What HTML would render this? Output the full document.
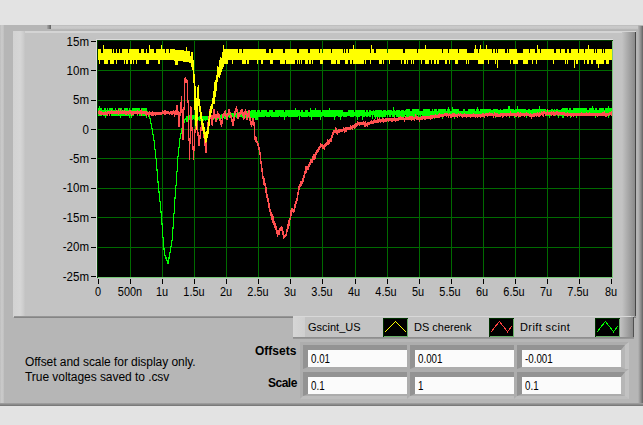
<!DOCTYPE html>
<html><head><meta charset="utf-8"><style>
html,body{margin:0;padding:0;}
body{width:643px;height:425px;position:relative;overflow:hidden;background:#e3e3e3;font-family:"Liberation Sans",sans-serif;color:#000;}
.a{position:absolute;}
.yl{position:absolute;left:20px;width:69px;text-align:right;font-size:12px;line-height:14px;transform:scaleX(0.96);transform-origin:100% 0;}
.xl{position:absolute;top:285px;width:60px;text-align:center;font-size:12px;line-height:14px;transform:scaleX(0.91);}
.tk{position:absolute;background:#000;}
.lg{position:absolute;top:320px;font-size:11px;line-height:14px;}
.bo{position:absolute;box-sizing:border-box;border-style:solid;border-width:3px 4px 3px 3px;border-color:#adadad #c2c2c2 #bdbdbd #adadad;}
.bi{position:absolute;left:0;top:0;right:0;bottom:0;border-style:solid;border-width:5px 4px 2px 5px;border-color:#939393 #b6b6b6 #acacac #939393;}
.wt{position:absolute;left:0;top:0;right:0;bottom:0;background:#fbfbfb;font-size:12px;line-height:17px;}
.wt span{position:absolute;left:3px;top:1px;font-size:12.5px;transform:scaleX(0.78);transform-origin:0 0;}
</style></head><body>
<!-- outer frame -->
<div class="a" style="left:0;top:25px;width:643px;height:381px;background:#b6b6b6;"></div>
<div class="a" style="left:0;top:25px;width:4px;height:380px;background:linear-gradient(90deg,#bcbcbc,#c9c9c9 30%,#c8c8c8 75%,#bdbdbd);"></div>
<div class="a" style="left:638px;top:26px;width:5px;height:379px;background:linear-gradient(90deg,#b6b6b6,#8a8a8a 60%,#626262);"></div>
<div class="a" style="left:0;top:403px;width:643px;height:3px;background:linear-gradient(180deg,#a4a4a4,#727272);"></div>
<div class="a" style="left:47px;top:25px;width:4px;height:4px;background:linear-gradient(90deg,#a8a8a8,#606060);"></div>
<div class="a" style="left:51px;top:25px;width:587px;height:6px;background:linear-gradient(180deg,#bababa 0,#c9c9c9 25%,#c8c8c8 55%,#b3b3b3 80%,#b3b3b3);"></div>
<!-- inner panel -->
<div class="a" style="left:13px;top:31px;width:623px;height:286px;background:#c3c3c3;"></div>
<div class="a" style="left:13px;top:31px;width:623px;height:2px;background:#d4d4d4;"></div>
<div class="a" style="left:13px;top:31px;width:12px;height:286px;background:linear-gradient(90deg,#d2d2d2,#d6d6d6 60%,#cdcdcd 85%,#c4c4c4);"></div>
<div class="a" style="left:622px;top:32px;width:13px;height:285px;background:linear-gradient(90deg,#c3c3c3,#8a8a8a);"></div><div class="a" style="left:635px;top:32px;width:1px;height:285px;background:#464646;"></div>
<div class="a" style="left:14px;top:316px;width:622px;height:2px;background:linear-gradient(180deg,#9e9e9e,#7c7c7c);"></div>
<svg width="643" height="425" style="position:absolute;left:0;top:0" shape-rendering="crispEdges">
<rect x="96" y="39" width="517" height="1" fill="#dcdcdc"/>
<rect x="96" y="39" width="1" height="239" fill="#dcdcdc"/>
<rect x="97" y="40" width="516" height="238" fill="#000"/>
<path d="M130 41h1v236h-1zM162 41h1v236h-1zM194 41h1v236h-1zM226 41h1v236h-1zM258 41h1v236h-1zM290 41h1v236h-1zM322 41h1v236h-1zM355 41h1v236h-1zM387 41h1v236h-1zM419 41h1v236h-1zM451 41h1v236h-1zM483 41h1v236h-1zM515 41h1v236h-1zM547 41h1v236h-1zM579 41h1v236h-1zM98 70h514v1h-514zM98 100h514v1h-514zM98 129h514v1h-514zM98 158h514v1h-514zM98 188h514v1h-514zM98 217h514v1h-514zM98 247h514v1h-514z" fill="#006a00"/>
<rect x="97" y="40" width="516" height="1" fill="#003c00"/>
<rect x="97" y="40" width="1" height="238" fill="#003c00"/>
<rect x="612" y="41" width="1" height="237" fill="#78c878"/>
<rect x="98" y="277" width="515" height="1" fill="#78c878"/>
<path d="M98 108h1v8h-1zM99 106h1v10h-1zM100 108h1v8h-1zM101 108h1v8h-1zM102 110h1v4h-1zM103 110h1v6h-1zM104 108h1v8h-1zM105 108h1v10h-1zM106 110h1v6h-1zM107 108h1v8h-1zM108 110h1v4h-1zM109 108h1v6h-1zM110 108h1v6h-1zM111 108h1v8h-1zM112 108h1v8h-1zM113 110h1v6h-1zM114 110h1v6h-1zM115 108h1v8h-1zM116 110h1v6h-1zM117 110h1v6h-1zM118 108h1v8h-1zM119 108h1v8h-1zM120 108h1v10h-1zM121 108h1v8h-1zM122 110h1v6h-1zM123 110h1v6h-1zM124 108h1v8h-1zM125 108h1v8h-1zM126 108h1v8h-1zM127 108h1v8h-1zM128 110h1v6h-1zM129 108h1v10h-1zM130 110h1v6h-1zM131 110h1v8h-1zM132 108h1v8h-1zM133 108h1v8h-1zM134 108h1v6h-1zM135 108h1v6h-1zM136 108h1v6h-1zM137 108h1v8h-1zM138 108h1v6h-1zM139 108h1v8h-1zM140 110h1v6h-1zM141 108h1v8h-1zM142 108h1v8h-1zM143 108h1v8h-1zM144 108h1v8h-1zM145 108h1v8h-1zM146 108h1v10h-1zM147 111h1v2h-1zM148 112h1v4h-1zM149 115h1v4h-1zM150 118h1v6h-1zM151 123h1v6h-1zM152 128h1v7h-1zM153 134h1v7h-1zM154 140h1v10h-1zM155 149h1v10h-1zM156 158h1v13h-1zM157 169h1v14h-1zM158 181h1v12h-1zM159 191h1v11h-1zM160 201h1v12h-1zM161 211h1v14h-1zM162 223h1v15h-1zM163 237h1v13h-1zM164 248h1v8h-1zM165 255h1v4h-1zM166 257h1v4h-1zM167 260h1v4h-1zM168 257h1v7h-1zM169 252h1v7h-1zM170 246h1v7h-1zM171 240h1v7h-1zM172 227h1v14h-1zM173 213h1v16h-1zM174 197h1v17h-1zM175 185h1v14h-1zM176 171h1v15h-1zM177 156h1v16h-1zM178 147h1v10h-1zM179 138h1v10h-1zM180 133h1v6h-1zM181 128h1v6h-1zM182 125h1v4h-1zM183 122h1v4h-1zM184 119h1v4h-1zM185 118h1v2h-1zM186 116h1v6h-1zM187 116h1v6h-1zM188 115h1v6h-1zM189 115h1v5h-1zM190 116h1v4h-1zM191 116h1v5h-1zM192 115h1v5h-1zM193 115h1v4h-1zM194 115h1v5h-1zM195 116h1v4h-1zM196 116h1v4h-1zM197 116h1v4h-1zM198 117h1v3h-1zM199 116h1v5h-1zM200 116h1v5h-1zM201 116h1v4h-1zM202 116h1v5h-1zM203 116h1v5h-1zM204 116h1v4h-1zM205 116h1v5h-1zM206 116h1v4h-1zM207 116h1v4h-1zM208 116h1v4h-1zM209 115h1v5h-1zM210 115h1v4h-1zM211 115h1v5h-1zM212 115h1v4h-1zM213 115h1v5h-1zM214 115h1v4h-1zM215 115h1v5h-1zM216 115h1v5h-1zM217 114h1v6h-1zM218 114h1v5h-1zM219 115h1v4h-1zM220 115h1v4h-1zM221 114h1v5h-1zM222 115h1v3h-1zM223 114h1v4h-1zM224 115h1v4h-1zM225 114h1v5h-1zM226 113h1v5h-1zM227 113h1v6h-1zM228 114h1v3h-1zM229 113h1v5h-1zM230 113h1v5h-1zM231 113h1v5h-1zM232 113h1v4h-1zM233 113h1v4h-1zM234 113h1v5h-1zM235 113h1v4h-1zM236 113h1v5h-1zM237 113h1v4h-1zM238 112h1v6h-1zM239 112h1v5h-1zM240 111h1v6h-1zM241 111h1v6h-1zM242 109h1v9h-1zM243 113h1v4h-1zM244 113h1v4h-1zM245 111h1v7h-1zM246 111h1v7h-1zM247 111h1v7h-1zM248 111h1v7h-1zM249 111h1v7h-1zM250 111h1v7h-1zM251 110h1v8h-1zM252 110h1v8h-1zM253 110h1v8h-1zM254 110h1v8h-1zM255 110h1v10h-1zM256 112h1v8h-1zM257 110h1v10h-1zM258 110h1v7h-1zM259 110h1v7h-1zM260 112h1v5h-1zM261 110h1v7h-1zM262 110h1v7h-1zM263 110h1v7h-1zM264 110h1v7h-1zM265 110h1v6h-1zM266 110h1v7h-1zM267 112h1v5h-1zM268 112h1v5h-1zM269 110h1v7h-1zM270 110h1v6h-1zM271 110h1v7h-1zM272 110h1v7h-1zM273 112h1v5h-1zM274 112h1v5h-1zM275 110h1v7h-1zM276 110h1v7h-1zM277 110h1v7h-1zM278 110h1v7h-1zM279 110h1v6h-1zM280 110h1v7h-1zM281 110h1v7h-1zM282 110h1v7h-1zM283 110h1v7h-1zM284 112h1v8h-1zM285 110h1v7h-1zM286 110h1v7h-1zM287 110h1v6h-1zM288 110h1v7h-1zM289 110h1v7h-1zM290 110h1v7h-1zM291 110h1v7h-1zM292 110h1v7h-1zM293 110h1v7h-1zM294 110h1v7h-1zM295 108h1v9h-1zM296 110h1v7h-1zM297 110h1v7h-1zM298 110h1v6h-1zM299 110h1v10h-1zM300 112h1v4h-1zM301 110h1v7h-1zM302 110h1v7h-1zM303 112h1v5h-1zM304 112h1v5h-1zM305 110h1v7h-1zM306 110h1v7h-1zM307 110h1v7h-1zM308 112h1v4h-1zM309 112h1v5h-1zM310 108h1v9h-1zM311 110h1v10h-1zM312 110h1v7h-1zM313 110h1v7h-1zM314 110h1v7h-1zM315 108h1v9h-1zM316 110h1v7h-1zM317 110h1v7h-1zM318 110h1v7h-1zM319 110h1v7h-1zM320 110h1v10h-1zM321 112h1v5h-1zM322 110h1v6h-1zM323 110h1v6h-1zM324 110h1v7h-1zM325 110h1v7h-1zM326 110h1v7h-1zM327 110h1v7h-1zM328 110h1v7h-1zM329 108h1v9h-1zM330 110h1v7h-1zM331 110h1v7h-1zM332 110h1v7h-1zM333 110h1v7h-1zM334 110h1v10h-1zM335 110h1v7h-1zM336 110h1v6h-1zM337 110h1v6h-1zM338 110h1v7h-1zM339 110h1v7h-1zM340 110h1v10h-1zM341 110h1v7h-1zM342 110h1v6h-1zM343 112h1v5h-1zM344 112h1v5h-1zM345 112h1v5h-1zM346 112h1v5h-1zM347 112h1v4h-1zM348 110h1v6h-1zM349 110h1v6h-1zM350 110h1v7h-1zM351 110h1v7h-1zM352 110h1v7h-1zM353 110h1v7h-1zM354 112h1v4h-1zM355 110h1v6h-1zM356 110h1v7h-1zM357 110h1v10h-1zM358 110h1v7h-1zM359 110h1v7h-1zM360 110h1v6h-1zM361 110h1v6h-1zM362 110h1v10h-1zM363 110h1v7h-1zM364 110h1v7h-1zM365 112h1v4h-1zM366 110h1v7h-1zM367 110h1v7h-1zM368 112h1v4h-1zM369 110h1v7h-1zM370 110h1v7h-1zM371 111h1v4h-1zM372 111h1v8h-1zM373 110h1v5h-1zM374 111h1v6h-1zM375 110h1v9h-1zM376 110h1v7h-1zM377 110h1v7h-1zM378 110h1v7h-1zM379 110h1v9h-1zM380 110h1v7h-1zM381 110h1v7h-1zM382 111h1v8h-1zM383 110h1v7h-1zM384 110h1v7h-1zM385 110h1v7h-1zM386 111h1v4h-1zM387 110h1v7h-1zM388 110h1v5h-1zM389 110h1v7h-1zM390 110h1v7h-1zM391 110h1v5h-1zM392 111h1v6h-1zM393 107h1v10h-1zM394 110h1v7h-1zM395 111h1v4h-1zM396 110h1v7h-1zM397 110h1v7h-1zM398 110h1v9h-1zM399 110h1v7h-1zM400 111h1v6h-1zM401 110h1v7h-1zM402 110h1v9h-1zM403 110h1v7h-1zM404 111h1v6h-1zM405 110h1v5h-1zM406 109h1v10h-1zM407 109h1v8h-1zM408 109h1v8h-1zM409 109h1v8h-1zM410 111h1v8h-1zM411 111h1v6h-1zM412 109h1v8h-1zM413 109h1v8h-1zM414 109h1v8h-1zM415 109h1v8h-1zM416 109h1v8h-1zM417 109h1v6h-1zM418 109h1v8h-1zM419 111h1v4h-1zM420 111h1v6h-1zM421 111h1v4h-1zM422 111h1v6h-1zM423 109h1v8h-1zM424 109h1v8h-1zM425 109h1v10h-1zM426 109h1v8h-1zM427 109h1v8h-1zM428 109h1v8h-1zM429 109h1v8h-1zM430 111h1v6h-1zM431 111h1v5h-1zM432 109h1v7h-1zM433 111h1v4h-1zM434 109h1v10h-1zM435 109h1v7h-1zM436 109h1v7h-1zM437 111h1v5h-1zM438 109h1v7h-1zM439 109h1v7h-1zM440 109h1v7h-1zM441 109h1v7h-1zM442 109h1v10h-1zM443 109h1v7h-1zM444 109h1v7h-1zM445 109h1v7h-1zM446 111h1v4h-1zM447 109h1v7h-1zM448 107h1v8h-1zM449 109h1v7h-1zM450 111h1v5h-1zM451 111h1v5h-1zM452 107h1v9h-1zM453 109h1v7h-1zM454 109h1v10h-1zM455 109h1v7h-1zM456 109h1v7h-1zM457 109h1v7h-1zM458 109h1v7h-1zM459 111h1v5h-1zM460 111h1v5h-1zM461 111h1v5h-1zM462 111h1v4h-1zM463 109h1v7h-1zM464 109h1v7h-1zM465 111h1v4h-1zM466 111h1v5h-1zM467 111h1v5h-1zM468 109h1v7h-1zM469 109h1v7h-1zM470 109h1v7h-1zM471 109h1v6h-1zM472 109h1v7h-1zM473 109h1v6h-1zM474 109h1v6h-1zM475 111h1v5h-1zM476 109h1v6h-1zM477 107h1v9h-1zM478 109h1v7h-1zM479 111h1v5h-1zM480 109h1v7h-1zM481 109h1v7h-1zM482 109h1v7h-1zM483 109h1v7h-1zM484 109h1v7h-1zM485 109h1v7h-1zM486 109h1v6h-1zM487 109h1v7h-1zM488 109h1v7h-1zM489 109h1v6h-1zM490 109h1v7h-1zM491 110h1v4h-1zM492 110h1v4h-1zM493 109h1v5h-1zM494 109h1v7h-1zM495 109h1v9h-1zM496 109h1v5h-1zM497 109h1v5h-1zM498 110h1v6h-1zM499 110h1v6h-1zM500 109h1v7h-1zM501 110h1v6h-1zM502 110h1v4h-1zM503 109h1v7h-1zM504 109h1v7h-1zM505 109h1v7h-1zM506 109h1v5h-1zM507 109h1v7h-1zM508 106h1v10h-1zM509 106h1v12h-1zM510 109h1v7h-1zM511 109h1v7h-1zM512 109h1v7h-1zM513 109h1v7h-1zM514 110h1v8h-1zM515 109h1v7h-1zM516 109h1v7h-1zM517 106h1v10h-1zM518 109h1v9h-1zM519 109h1v7h-1zM520 109h1v7h-1zM521 109h1v7h-1zM522 109h1v7h-1zM523 109h1v7h-1zM524 109h1v7h-1zM525 109h1v7h-1zM526 110h1v8h-1zM527 110h1v6h-1zM528 109h1v7h-1zM529 109h1v7h-1zM530 110h1v6h-1zM531 110h1v6h-1zM532 109h1v5h-1zM533 109h1v7h-1zM534 109h1v7h-1zM535 109h1v7h-1zM536 109h1v7h-1zM537 109h1v7h-1zM538 109h1v7h-1zM539 106h1v10h-1zM540 109h1v7h-1zM541 109h1v5h-1zM542 109h1v7h-1zM543 109h1v7h-1zM544 109h1v5h-1zM545 109h1v7h-1zM546 110h1v6h-1zM547 110h1v6h-1zM548 110h1v6h-1zM549 110h1v8h-1zM550 110h1v6h-1zM551 109h1v7h-1zM552 109h1v5h-1zM553 110h1v6h-1zM554 109h1v7h-1zM555 110h1v6h-1zM556 109h1v5h-1zM557 109h1v7h-1zM558 110h1v8h-1zM559 110h1v6h-1zM560 110h1v6h-1zM561 109h1v7h-1zM562 108h1v10h-1zM563 108h1v10h-1zM564 108h1v8h-1zM565 108h1v8h-1zM566 108h1v6h-1zM567 108h1v6h-1zM568 110h1v6h-1zM569 108h1v8h-1zM570 108h1v10h-1zM571 110h1v6h-1zM572 110h1v4h-1zM573 108h1v8h-1zM574 108h1v8h-1zM575 108h1v8h-1zM576 108h1v10h-1zM577 108h1v8h-1zM578 108h1v8h-1zM579 108h1v8h-1zM580 108h1v8h-1zM581 108h1v8h-1zM582 108h1v6h-1zM583 108h1v6h-1zM584 108h1v8h-1zM585 108h1v8h-1zM586 108h1v8h-1zM587 110h1v6h-1zM588 110h1v6h-1zM589 108h1v8h-1zM590 108h1v6h-1zM591 108h1v8h-1zM592 106h1v8h-1zM593 108h1v8h-1zM594 110h1v6h-1zM595 108h1v10h-1zM596 108h1v8h-1zM597 110h1v4h-1zM598 110h1v6h-1zM599 108h1v8h-1zM600 108h1v8h-1zM601 108h1v6h-1zM602 108h1v6h-1zM603 108h1v8h-1zM604 110h1v4h-1zM605 108h1v8h-1zM606 108h1v8h-1zM607 108h1v8h-1zM608 106h1v12h-1zM609 108h1v8h-1zM610 108h1v6h-1zM611 108h1v8h-1z" fill="#00ff00"/><path d="M98 111h1v3h-1zM99 110h1v5h-1zM100 111h1v4h-1zM101 111h1v4h-1zM102 112h1v3h-1zM103 112h1v3h-1zM104 112h1v3h-1zM105 111h1v4h-1zM106 112h1v3h-1zM107 111h1v5h-1zM108 111h1v3h-1zM109 111h1v5h-1zM110 111h1v3h-1zM111 110h1v4h-1zM112 111h1v3h-1zM113 111h1v3h-1zM114 111h1v3h-1zM115 111h1v3h-1zM116 110h1v4h-1zM117 111h1v3h-1zM118 109h1v6h-1zM119 111h1v3h-1zM120 109h1v5h-1zM121 111h1v3h-1zM122 110h1v4h-1zM123 111h1v3h-1zM124 110h1v4h-1zM125 111h1v4h-1zM126 111h1v4h-1zM127 111h1v3h-1zM128 111h1v4h-1zM129 110h1v4h-1zM130 110h1v4h-1zM131 111h1v5h-1zM132 111h1v4h-1zM133 111h1v4h-1zM134 111h1v3h-1zM135 111h1v3h-1zM136 111h1v3h-1zM137 110h1v5h-1zM138 111h1v3h-1zM139 111h1v3h-1zM140 110h1v4h-1zM141 109h1v7h-1zM142 111h1v3h-1zM143 111h1v3h-1zM144 111h1v3h-1zM145 111h1v4h-1zM146 111h1v5h-1zM147 112h1v3h-1zM148 112h1v5h-1zM149 111h1v4h-1zM150 112h1v3h-1zM151 112h1v4h-1zM152 111h1v5h-1zM153 112h1v4h-1zM154 112h1v3h-1zM155 112h1v4h-1zM156 112h1v3h-1zM157 112h1v3h-1zM158 112h1v3h-1zM159 112h1v3h-1zM160 112h1v3h-1zM161 112h1v3h-1zM162 110h1v4h-1zM163 111h1v3h-1zM164 110h1v5h-1zM165 110h1v5h-1zM166 111h1v3h-1zM167 111h1v3h-1zM168 111h1v3h-1zM169 112h1v3h-1zM170 111h1v3h-1zM171 111h1v4h-1zM172 111h1v4h-1zM173 110h1v4h-1zM174 111h1v6h-1zM175 110h1v5h-1zM176 105h1v10h-1zM177 105h1v10h-1zM178 111h1v16h-1zM179 112h1v15h-1zM180 102h1v14h-1zM181 96h1v17h-1zM182 109h1v31h-1zM183 107h1v33h-1zM184 78h1v32h-1zM185 77h1v6h-1zM186 79h1v4h-1zM187 80h1v23h-1zM188 100h1v41h-1zM189 138h1v22h-1zM190 106h1v38h-1zM191 107h1v24h-1zM192 127h1v23h-1zM193 146h1v14h-1zM194 129h1v22h-1zM195 111h1v22h-1zM196 111h1v14h-1zM197 121h1v15h-1zM198 132h1v14h-1zM199 135h1v11h-1zM200 127h1v12h-1zM201 120h1v11h-1zM202 120h1v11h-1zM203 128h1v10h-1zM204 134h1v12h-1zM205 142h1v11h-1zM206 133h1v20h-1zM207 122h1v15h-1zM208 116h1v9h-1zM209 109h1v10h-1zM210 109h1v10h-1zM211 115h1v10h-1zM212 115h1v11h-1zM213 109h1v10h-1zM214 109h1v9h-1zM215 114h1v8h-1zM216 114h1v8h-1zM217 111h1v7h-1zM218 113h1v5h-1zM219 114h1v7h-1zM220 118h1v7h-1zM221 120h1v7h-1zM222 114h1v10h-1zM223 113h1v5h-1zM224 111h1v5h-1zM225 110h1v7h-1zM226 114h1v6h-1zM227 113h1v7h-1zM228 109h1v7h-1zM229 109h1v6h-1zM230 112h1v6h-1zM231 115h1v7h-1zM232 119h1v7h-1zM233 117h1v9h-1zM234 111h1v10h-1zM235 108h1v7h-1zM236 106h1v6h-1zM237 109h1v10h-1zM238 113h1v6h-1zM239 112h1v5h-1zM240 110h1v5h-1zM241 109h1v5h-1zM242 109h1v7h-1zM243 112h1v8h-1zM244 111h1v8h-1zM245 109h1v6h-1zM246 111h1v9h-1zM247 113h1v7h-1zM248 110h1v7h-1zM249 110h1v11h-1zM250 117h1v8h-1zM251 121h1v6h-1zM252 118h1v7h-1zM253 118h1v8h-1zM254 122h1v18h-1zM255 136h1v6h-1zM256 137h1v6h-1zM257 141h1v5h-1zM258 143h1v7h-1zM259 147h1v8h-1zM260 152h1v12h-1zM261 161h1v11h-1zM262 168h1v11h-1zM263 176h1v9h-1zM264 178h1v8h-1zM265 183h1v10h-1zM266 187h1v11h-1zM267 194h1v8h-1zM268 198h1v10h-1zM269 203h1v9h-1zM270 209h1v7h-1zM271 212h1v8h-1zM272 214h1v9h-1zM273 216h1v9h-1zM274 221h1v7h-1zM275 223h1v7h-1zM276 226h1v8h-1zM277 230h1v7h-1zM278 230h1v5h-1zM279 228h1v7h-1zM280 227h1v4h-1zM281 226h1v5h-1zM282 227h1v8h-1zM283 231h1v8h-1zM284 235h1v3h-1zM285 234h1v3h-1zM286 229h1v7h-1zM287 224h1v8h-1zM288 220h1v9h-1zM289 218h1v8h-1zM290 210h1v10h-1zM291 208h1v8h-1zM292 208h1v4h-1zM293 209h1v4h-1zM294 204h1v8h-1zM295 201h1v7h-1zM296 198h1v6h-1zM297 192h1v9h-1zM298 186h1v9h-1zM299 184h1v6h-1zM300 181h1v6h-1zM301 181h1v5h-1zM302 178h1v6h-1zM303 175h1v7h-1zM304 171h1v7h-1zM305 166h1v8h-1zM306 166h1v7h-1zM307 166h1v4h-1zM308 164h1v6h-1zM309 162h1v5h-1zM310 159h1v6h-1zM311 159h1v4h-1zM312 156h1v7h-1zM313 154h1v6h-1zM314 154h1v6h-1zM315 152h1v7h-1zM316 150h1v5h-1zM317 149h1v4h-1zM318 147h1v5h-1zM319 146h1v4h-1zM320 143h1v5h-1zM321 144h1v3h-1zM322 144h1v5h-1zM323 145h1v4h-1zM324 144h1v6h-1zM325 143h1v4h-1zM326 142h1v4h-1zM327 139h1v6h-1zM328 140h1v5h-1zM329 139h1v5h-1zM330 138h1v4h-1zM331 135h1v7h-1zM332 132h1v6h-1zM333 130h1v5h-1zM334 130h1v3h-1zM335 127h1v6h-1zM336 128h1v6h-1zM337 130h1v5h-1zM338 129h1v4h-1zM339 129h1v4h-1zM340 129h1v3h-1zM341 129h1v3h-1zM342 129h1v3h-1zM343 127h1v4h-1zM344 128h1v5h-1zM345 127h1v5h-1zM346 127h1v5h-1zM347 127h1v3h-1zM348 127h1v3h-1zM349 127h1v3h-1zM350 125h1v5h-1zM351 126h1v3h-1zM352 125h1v5h-1zM353 125h1v3h-1zM354 124h1v5h-1zM355 123h1v5h-1zM356 123h1v4h-1zM357 121h1v5h-1zM358 122h1v3h-1zM359 122h1v4h-1zM360 122h1v3h-1zM361 122h1v3h-1zM362 122h1v3h-1zM363 121h1v4h-1zM364 122h1v5h-1zM365 121h1v6h-1zM366 123h1v3h-1zM367 122h1v5h-1zM368 122h1v3h-1zM369 122h1v3h-1zM370 121h1v3h-1zM371 120h1v4h-1zM372 121h1v3h-1zM373 120h1v4h-1zM374 119h1v4h-1zM375 120h1v3h-1zM376 120h1v3h-1zM377 117h1v6h-1zM378 119h1v4h-1zM379 118h1v4h-1zM380 119h1v4h-1zM381 119h1v3h-1zM382 118h1v4h-1zM383 118h1v5h-1zM384 119h1v3h-1zM385 118h1v4h-1zM386 118h1v4h-1zM387 118h1v3h-1zM388 118h1v4h-1zM389 118h1v3h-1zM390 118h1v3h-1zM391 118h1v4h-1zM392 118h1v4h-1zM393 118h1v3h-1zM394 117h1v4h-1zM395 118h1v4h-1zM396 118h1v3h-1zM397 118h1v3h-1zM398 117h1v4h-1zM399 117h1v3h-1zM400 116h1v4h-1zM401 117h1v3h-1zM402 117h1v3h-1zM403 117h1v3h-1zM404 118h1v4h-1zM405 116h1v4h-1zM406 117h1v3h-1zM407 117h1v3h-1zM408 117h1v3h-1zM409 116h1v4h-1zM410 116h1v4h-1zM411 116h1v5h-1zM412 116h1v4h-1zM413 117h1v3h-1zM414 117h1v4h-1zM415 114h1v5h-1zM416 116h1v4h-1zM417 116h1v4h-1zM418 117h1v3h-1zM419 117h1v5h-1zM420 117h1v3h-1zM421 116h1v4h-1zM422 116h1v4h-1zM423 116h1v3h-1zM424 116h1v4h-1zM425 116h1v4h-1zM426 116h1v3h-1zM427 116h1v3h-1zM428 116h1v3h-1zM429 116h1v3h-1zM430 115h1v5h-1zM431 115h1v4h-1zM432 115h1v4h-1zM433 115h1v3h-1zM434 115h1v3h-1zM435 114h1v4h-1zM436 115h1v3h-1zM437 115h1v3h-1zM438 114h1v4h-1zM439 113h1v5h-1zM440 114h1v3h-1zM441 114h1v3h-1zM442 114h1v3h-1zM443 114h1v3h-1zM444 113h1v3h-1zM445 113h1v3h-1zM446 113h1v4h-1zM447 113h1v3h-1zM448 114h1v4h-1zM449 113h1v3h-1zM450 114h1v4h-1zM451 114h1v4h-1zM452 113h1v4h-1zM453 113h1v4h-1zM454 113h1v4h-1zM455 114h1v3h-1zM456 114h1v3h-1zM457 114h1v4h-1zM458 113h1v3h-1zM459 114h1v3h-1zM460 113h1v3h-1zM461 114h1v3h-1zM462 114h1v4h-1zM463 114h1v3h-1zM464 113h1v4h-1zM465 114h1v3h-1zM466 114h1v4h-1zM467 114h1v3h-1zM468 114h1v3h-1zM469 114h1v3h-1zM470 114h1v4h-1zM471 114h1v3h-1zM472 114h1v3h-1zM473 113h1v4h-1zM474 114h1v3h-1zM475 114h1v4h-1zM476 114h1v3h-1zM477 114h1v4h-1zM478 114h1v3h-1zM479 114h1v3h-1zM480 114h1v4h-1zM481 114h1v3h-1zM482 113h1v4h-1zM483 113h1v4h-1zM484 114h1v4h-1zM485 113h1v3h-1zM486 113h1v3h-1zM487 113h1v4h-1zM488 113h1v3h-1zM489 112h1v4h-1zM490 113h1v3h-1zM491 113h1v3h-1zM492 113h1v3h-1zM493 114h1v4h-1zM494 112h1v4h-1zM495 113h1v4h-1zM496 113h1v4h-1zM497 113h1v4h-1zM498 114h1v3h-1zM499 114h1v3h-1zM500 113h1v4h-1zM501 113h1v3h-1zM502 113h1v5h-1zM503 113h1v4h-1zM504 113h1v3h-1zM505 113h1v3h-1zM506 113h1v4h-1zM507 113h1v3h-1zM508 113h1v3h-1zM509 113h1v4h-1zM510 111h1v5h-1zM511 113h1v3h-1zM512 113h1v3h-1zM513 113h1v3h-1zM514 113h1v3h-1zM515 113h1v4h-1zM516 113h1v4h-1zM517 112h1v4h-1zM518 112h1v5h-1zM519 113h1v4h-1zM520 112h1v5h-1zM521 113h1v3h-1zM522 113h1v3h-1zM523 113h1v3h-1zM524 113h1v4h-1zM525 113h1v3h-1zM526 112h1v4h-1zM527 113h1v3h-1zM528 113h1v3h-1zM529 114h1v3h-1zM530 113h1v4h-1zM531 114h1v5h-1zM532 114h1v3h-1zM533 113h1v4h-1zM534 113h1v4h-1zM535 113h1v3h-1zM536 113h1v4h-1zM537 112h1v4h-1zM538 113h1v4h-1zM539 112h1v5h-1zM540 113h1v3h-1zM541 111h1v4h-1zM542 112h1v4h-1zM543 111h1v6h-1zM544 111h1v3h-1zM545 112h1v4h-1zM546 112h1v3h-1zM547 109h1v6h-1zM548 112h1v3h-1zM549 112h1v3h-1zM550 112h1v3h-1zM551 111h1v5h-1zM552 112h1v3h-1zM553 111h1v5h-1zM554 112h1v4h-1zM555 112h1v3h-1zM556 111h1v4h-1zM557 111h1v4h-1zM558 112h1v4h-1zM559 112h1v3h-1zM560 112h1v3h-1zM561 112h1v3h-1zM562 112h1v3h-1zM563 112h1v3h-1zM564 112h1v4h-1zM565 113h1v3h-1zM566 113h1v3h-1zM567 112h1v5h-1zM568 113h1v3h-1zM569 113h1v3h-1zM570 113h1v3h-1zM571 113h1v4h-1zM572 113h1v3h-1zM573 113h1v4h-1zM574 113h1v3h-1zM575 113h1v3h-1zM576 113h1v3h-1zM577 113h1v3h-1zM578 113h1v3h-1zM579 113h1v3h-1zM580 113h1v3h-1zM581 112h1v4h-1zM582 113h1v3h-1zM583 113h1v3h-1zM584 113h1v3h-1zM585 113h1v3h-1zM586 112h1v4h-1zM587 113h1v3h-1zM588 113h1v3h-1zM589 112h1v4h-1zM590 113h1v3h-1zM591 113h1v3h-1zM592 113h1v3h-1zM593 113h1v3h-1zM594 113h1v3h-1zM595 113h1v3h-1zM596 113h1v3h-1zM597 113h1v4h-1zM598 113h1v3h-1zM599 113h1v3h-1zM600 113h1v3h-1zM601 113h1v3h-1zM602 112h1v4h-1zM603 112h1v4h-1zM604 111h1v5h-1zM605 113h1v4h-1zM606 113h1v4h-1zM607 113h1v3h-1zM608 113h1v3h-1zM609 112h1v3h-1zM610 112h1v3h-1zM611 111h1v5h-1z" fill="#ff5050"/><path d="M98 49h1v11h-1zM99 49h1v15h-1zM100 49h1v11h-1zM101 53h1v7h-1zM102 53h1v7h-1zM103 45h1v15h-1zM104 49h1v15h-1zM105 49h1v15h-1zM106 49h1v15h-1zM107 49h1v15h-1zM108 49h1v11h-1zM109 49h1v11h-1zM110 49h1v15h-1zM111 49h1v15h-1zM112 53h1v11h-1zM113 49h1v15h-1zM114 53h1v7h-1zM115 53h1v7h-1zM116 49h1v15h-1zM117 53h1v7h-1zM118 53h1v7h-1zM119 49h1v11h-1zM120 53h1v7h-1zM121 53h1v7h-1zM122 49h1v11h-1zM123 49h1v11h-1zM124 49h1v15h-1zM125 49h1v11h-1zM126 49h1v15h-1zM127 49h1v15h-1zM128 53h1v7h-1zM129 49h1v11h-1zM130 49h1v15h-1zM131 49h1v15h-1zM132 49h1v11h-1zM133 49h1v15h-1zM134 49h1v11h-1zM135 49h1v11h-1zM136 49h1v15h-1zM137 49h1v11h-1zM138 49h1v11h-1zM139 53h1v7h-1zM140 53h1v7h-1zM141 49h1v11h-1zM142 49h1v11h-1zM143 49h1v11h-1zM144 53h1v7h-1zM145 53h1v7h-1zM146 49h1v15h-1zM147 53h1v11h-1zM148 53h1v11h-1zM149 45h1v15h-1zM150 49h1v11h-1zM151 49h1v11h-1zM152 49h1v11h-1zM153 49h1v11h-1zM154 53h1v7h-1zM155 53h1v7h-1zM156 49h1v11h-1zM157 49h1v11h-1zM158 49h1v15h-1zM159 49h1v15h-1zM160 49h1v11h-1zM161 45h1v15h-1zM162 49h1v11h-1zM163 49h1v11h-1zM164 49h1v11h-1zM165 53h1v7h-1zM166 49h1v11h-1zM167 49h1v11h-1zM168 49h1v11h-1zM169 53h1v7h-1zM170 49h1v11h-1zM171 49h1v11h-1zM172 49h1v11h-1zM173 49h1v11h-1zM174 49h1v12h-1zM175 50h1v15h-1zM176 50h1v15h-1zM177 50h1v15h-1zM178 50h1v11h-1zM179 50h1v11h-1zM180 50h1v11h-1zM181 50h1v11h-1zM182 50h1v11h-1zM183 50h1v12h-1zM184 51h1v11h-1zM185 51h1v11h-1zM186 47h1v15h-1zM187 51h1v11h-1zM188 51h1v11h-1zM189 51h1v12h-1zM190 56h1v7h-1zM191 52h1v15h-1zM192 52h1v18h-1zM193 60h1v23h-1zM194 74h1v36h-1zM195 86h1v40h-1zM196 98h1v32h-1zM197 87h1v34h-1zM198 85h1v21h-1zM199 99h1v13h-1zM200 106h1v13h-1zM201 112h1v13h-1zM202 119h1v11h-1zM203 123h1v11h-1zM204 127h1v12h-1zM205 132h1v11h-1zM206 131h1v11h-1zM207 127h1v11h-1zM208 119h1v15h-1zM209 111h1v15h-1zM210 106h1v11h-1zM211 104h1v9h-1zM212 98h1v11h-1zM213 91h1v13h-1zM214 82h1v22h-1zM215 80h1v17h-1zM216 75h1v16h-1zM217 66h1v16h-1zM218 67h1v10h-1zM219 60h1v18h-1zM220 57h1v18h-1zM221 58h1v14h-1zM222 52h1v17h-1zM223 45h1v22h-1zM224 49h1v15h-1zM225 49h1v15h-1zM226 49h1v15h-1zM227 49h1v15h-1zM228 49h1v11h-1zM229 49h1v11h-1zM230 49h1v11h-1zM231 49h1v11h-1zM232 49h1v15h-1zM233 49h1v11h-1zM234 49h1v11h-1zM235 49h1v11h-1zM236 49h1v11h-1zM237 49h1v11h-1zM238 53h1v7h-1zM239 49h1v11h-1zM240 49h1v11h-1zM241 49h1v11h-1zM242 53h1v11h-1zM243 49h1v15h-1zM244 49h1v15h-1zM245 49h1v15h-1zM246 49h1v11h-1zM247 49h1v15h-1zM248 49h1v15h-1zM249 49h1v11h-1zM250 49h1v11h-1zM251 49h1v11h-1zM252 49h1v11h-1zM253 49h1v11h-1zM254 49h1v11h-1zM255 49h1v11h-1zM256 49h1v11h-1zM257 49h1v15h-1zM258 49h1v11h-1zM259 49h1v11h-1zM260 49h1v11h-1zM261 49h1v15h-1zM262 49h1v15h-1zM263 49h1v11h-1zM264 49h1v11h-1zM265 49h1v11h-1zM266 53h1v7h-1zM267 53h1v7h-1zM268 53h1v7h-1zM269 49h1v11h-1zM270 49h1v15h-1zM271 53h1v11h-1zM272 53h1v11h-1zM273 49h1v11h-1zM274 49h1v11h-1zM275 49h1v11h-1zM276 49h1v11h-1zM277 49h1v11h-1zM278 49h1v11h-1zM279 49h1v11h-1zM280 49h1v15h-1zM281 49h1v15h-1zM282 49h1v15h-1zM283 53h1v11h-1zM284 53h1v11h-1zM285 49h1v11h-1zM286 49h1v15h-1zM287 49h1v15h-1zM288 49h1v15h-1zM289 49h1v15h-1zM290 49h1v15h-1zM291 49h1v15h-1zM292 49h1v15h-1zM293 49h1v15h-1zM294 49h1v15h-1zM295 49h1v11h-1zM296 49h1v11h-1zM297 53h1v11h-1zM298 53h1v7h-1zM299 49h1v15h-1zM300 49h1v11h-1zM301 49h1v15h-1zM302 49h1v11h-1zM303 49h1v11h-1zM304 49h1v11h-1zM305 49h1v15h-1zM306 49h1v15h-1zM307 49h1v15h-1zM308 53h1v7h-1zM309 53h1v11h-1zM310 49h1v15h-1zM311 49h1v11h-1zM312 49h1v15h-1zM313 49h1v11h-1zM314 49h1v11h-1zM315 49h1v11h-1zM316 49h1v11h-1zM317 49h1v11h-1zM318 49h1v11h-1zM319 53h1v7h-1zM320 49h1v15h-1zM321 49h1v15h-1zM322 53h1v11h-1zM323 49h1v11h-1zM324 49h1v11h-1zM325 49h1v11h-1zM326 49h1v11h-1zM327 49h1v11h-1zM328 49h1v11h-1zM329 49h1v11h-1zM330 49h1v11h-1zM331 53h1v11h-1zM332 49h1v15h-1zM333 49h1v15h-1zM334 49h1v15h-1zM335 49h1v15h-1zM336 49h1v11h-1zM337 49h1v15h-1zM338 49h1v15h-1zM339 49h1v15h-1zM340 49h1v11h-1zM341 49h1v11h-1zM342 49h1v11h-1zM343 53h1v7h-1zM344 49h1v11h-1zM345 53h1v11h-1zM346 49h1v15h-1zM347 49h1v15h-1zM348 53h1v7h-1zM349 49h1v11h-1zM350 49h1v15h-1zM351 49h1v15h-1zM352 49h1v11h-1zM353 45h1v19h-1zM354 49h1v15h-1zM355 49h1v15h-1zM356 49h1v15h-1zM357 49h1v15h-1zM358 49h1v15h-1zM359 49h1v15h-1zM360 49h1v15h-1zM361 49h1v15h-1zM362 49h1v15h-1zM363 49h1v15h-1zM364 49h1v11h-1zM365 49h1v15h-1zM366 49h1v11h-1zM367 49h1v11h-1zM368 49h1v11h-1zM369 49h1v11h-1zM370 53h1v11h-1zM371 45h1v15h-1zM372 49h1v11h-1zM373 49h1v11h-1zM374 53h1v7h-1zM375 53h1v7h-1zM376 49h1v11h-1zM377 49h1v11h-1zM378 49h1v11h-1zM379 49h1v15h-1zM380 49h1v15h-1zM381 49h1v15h-1zM382 49h1v11h-1zM383 49h1v15h-1zM384 49h1v11h-1zM385 49h1v11h-1zM386 49h1v11h-1zM387 53h1v7h-1zM388 49h1v11h-1zM389 49h1v15h-1zM390 49h1v11h-1zM391 49h1v11h-1zM392 49h1v11h-1zM393 49h1v11h-1zM394 49h1v11h-1zM395 49h1v11h-1zM396 49h1v11h-1zM397 49h1v11h-1zM398 49h1v11h-1zM399 49h1v11h-1zM400 49h1v11h-1zM401 49h1v15h-1zM402 49h1v11h-1zM403 53h1v7h-1zM404 53h1v11h-1zM405 49h1v15h-1zM406 49h1v11h-1zM407 49h1v15h-1zM408 49h1v11h-1zM409 49h1v11h-1zM410 49h1v11h-1zM411 49h1v15h-1zM412 49h1v11h-1zM413 49h1v15h-1zM414 49h1v11h-1zM415 49h1v11h-1zM416 49h1v11h-1zM417 53h1v7h-1zM418 49h1v11h-1zM419 49h1v11h-1zM420 49h1v11h-1zM421 49h1v15h-1zM422 49h1v11h-1zM423 49h1v11h-1zM424 49h1v11h-1zM425 45h1v19h-1zM426 49h1v15h-1zM427 49h1v15h-1zM428 49h1v15h-1zM429 49h1v11h-1zM430 49h1v11h-1zM431 49h1v15h-1zM432 49h1v11h-1zM433 49h1v11h-1zM434 49h1v15h-1zM435 49h1v15h-1zM436 49h1v11h-1zM437 49h1v15h-1zM438 49h1v15h-1zM439 49h1v11h-1zM440 49h1v11h-1zM441 49h1v11h-1zM442 53h1v7h-1zM443 49h1v11h-1zM444 49h1v11h-1zM445 49h1v15h-1zM446 49h1v15h-1zM447 49h1v11h-1zM448 53h1v7h-1zM449 49h1v15h-1zM450 49h1v11h-1zM451 49h1v11h-1zM452 49h1v11h-1zM453 49h1v11h-1zM454 49h1v11h-1zM455 49h1v15h-1zM456 49h1v15h-1zM457 49h1v15h-1zM458 53h1v7h-1zM459 49h1v11h-1zM460 49h1v11h-1zM461 49h1v11h-1zM462 49h1v11h-1zM463 49h1v11h-1zM464 49h1v11h-1zM465 49h1v11h-1zM466 49h1v15h-1zM467 53h1v7h-1zM468 53h1v11h-1zM469 53h1v7h-1zM470 53h1v7h-1zM471 53h1v7h-1zM472 53h1v7h-1zM473 53h1v7h-1zM474 49h1v11h-1zM475 45h1v15h-1zM476 49h1v11h-1zM477 49h1v11h-1zM478 53h1v11h-1zM479 49h1v15h-1zM480 45h1v19h-1zM481 49h1v15h-1zM482 49h1v15h-1zM483 49h1v15h-1zM484 49h1v11h-1zM485 49h1v11h-1zM486 45h1v15h-1zM487 49h1v11h-1zM488 49h1v15h-1zM489 49h1v11h-1zM490 49h1v11h-1zM491 49h1v11h-1zM492 53h1v7h-1zM493 49h1v11h-1zM494 49h1v11h-1zM495 53h1v11h-1zM496 49h1v11h-1zM497 53h1v15h-1zM498 49h1v11h-1zM499 49h1v11h-1zM500 49h1v11h-1zM501 49h1v11h-1zM502 49h1v11h-1zM503 49h1v11h-1zM504 49h1v11h-1zM505 53h1v7h-1zM506 53h1v7h-1zM507 49h1v11h-1zM508 53h1v7h-1zM509 49h1v11h-1zM510 49h1v15h-1zM511 49h1v11h-1zM512 49h1v11h-1zM513 49h1v15h-1zM514 49h1v15h-1zM515 49h1v15h-1zM516 49h1v15h-1zM517 53h1v11h-1zM518 53h1v7h-1zM519 53h1v7h-1zM520 53h1v7h-1zM521 53h1v7h-1zM522 53h1v7h-1zM523 49h1v15h-1zM524 49h1v15h-1zM525 49h1v15h-1zM526 49h1v15h-1zM527 49h1v15h-1zM528 49h1v11h-1zM529 53h1v7h-1zM530 49h1v11h-1zM531 49h1v11h-1zM532 49h1v15h-1zM533 49h1v11h-1zM534 49h1v11h-1zM535 53h1v7h-1zM536 53h1v11h-1zM537 45h1v15h-1zM538 49h1v11h-1zM539 49h1v11h-1zM540 53h1v7h-1zM541 49h1v11h-1zM542 49h1v11h-1zM543 49h1v11h-1zM544 49h1v11h-1zM545 49h1v11h-1zM546 49h1v11h-1zM547 49h1v11h-1zM548 49h1v11h-1zM549 49h1v11h-1zM550 49h1v11h-1zM551 49h1v11h-1zM552 49h1v11h-1zM553 49h1v15h-1zM554 53h1v7h-1zM555 53h1v7h-1zM556 49h1v11h-1zM557 49h1v11h-1zM558 49h1v11h-1zM559 49h1v11h-1zM560 53h1v7h-1zM561 49h1v11h-1zM562 49h1v11h-1zM563 49h1v11h-1zM564 49h1v11h-1zM565 53h1v11h-1zM566 53h1v7h-1zM567 49h1v15h-1zM568 49h1v11h-1zM569 53h1v7h-1zM570 53h1v7h-1zM571 49h1v11h-1zM572 49h1v11h-1zM573 49h1v11h-1zM574 49h1v19h-1zM575 49h1v11h-1zM576 49h1v15h-1zM577 49h1v15h-1zM578 53h1v7h-1zM579 49h1v11h-1zM580 49h1v11h-1zM581 49h1v11h-1zM582 49h1v11h-1zM583 49h1v11h-1zM584 53h1v11h-1zM585 49h1v11h-1zM586 49h1v11h-1zM587 49h1v15h-1zM588 45h1v19h-1zM589 49h1v11h-1zM590 49h1v11h-1zM591 49h1v15h-1zM592 49h1v15h-1zM593 49h1v11h-1zM594 53h1v7h-1zM595 49h1v11h-1zM596 53h1v11h-1zM597 49h1v15h-1zM598 49h1v19h-1zM599 49h1v15h-1zM600 49h1v15h-1zM601 49h1v15h-1zM602 53h1v11h-1zM603 49h1v15h-1zM604 53h1v7h-1zM605 49h1v11h-1zM606 49h1v15h-1zM607 49h1v15h-1zM608 49h1v15h-1zM609 49h1v11h-1zM610 49h1v11h-1zM611 49h1v11h-1z" fill="#ffff00"/>
</svg>
<div class="yl" style="top:34.5px">15m</div><div class="yl" style="top:63.9px">10m</div><div class="yl" style="top:93.2px">5m</div><div class="yl" style="top:122.6px">0</div><div class="yl" style="top:152.0px">-5m</div><div class="yl" style="top:181.4px">-10m</div><div class="yl" style="top:210.8px">-15m</div><div class="yl" style="top:240.1px">-20m</div><div class="yl" style="top:269.5px">-25m</div>
<div class="tk" style="left:91px;top:41px;width:5px;height:1px"></div><div class="tk" style="left:91px;top:70px;width:5px;height:1px"></div><div class="tk" style="left:91px;top:100px;width:5px;height:1px"></div><div class="tk" style="left:91px;top:129px;width:5px;height:1px"></div><div class="tk" style="left:91px;top:158px;width:5px;height:1px"></div><div class="tk" style="left:91px;top:188px;width:5px;height:1px"></div><div class="tk" style="left:91px;top:217px;width:5px;height:1px"></div><div class="tk" style="left:91px;top:247px;width:5px;height:1px"></div><div class="tk" style="left:91px;top:276px;width:5px;height:1px"></div>
<div class="xl" style="left:67.5px">0</div><div class="xl" style="left:99.6px">500n</div><div class="xl" style="left:131.6px">1u</div><div class="xl" style="left:163.7px">1.5u</div><div class="xl" style="left:195.8px">2u</div><div class="xl" style="left:227.8px">2.5u</div><div class="xl" style="left:259.9px">3u</div><div class="xl" style="left:291.9px">3.5u</div><div class="xl" style="left:324.0px">4u</div><div class="xl" style="left:356.1px">4.5u</div><div class="xl" style="left:388.1px">5u</div><div class="xl" style="left:420.2px">5.5u</div><div class="xl" style="left:452.2px">6u</div><div class="xl" style="left:484.3px">6.5u</div><div class="xl" style="left:516.4px">7u</div><div class="xl" style="left:548.4px">7.5u</div><div class="xl" style="left:580.5px">8u</div>
<div class="tk" style="left:98px;top:279px;width:1px;height:5px"></div><div class="tk" style="left:130px;top:279px;width:1px;height:5px"></div><div class="tk" style="left:162px;top:279px;width:1px;height:5px"></div><div class="tk" style="left:194px;top:279px;width:1px;height:5px"></div><div class="tk" style="left:226px;top:279px;width:1px;height:5px"></div><div class="tk" style="left:258px;top:279px;width:1px;height:5px"></div><div class="tk" style="left:290px;top:279px;width:1px;height:5px"></div><div class="tk" style="left:322px;top:279px;width:1px;height:5px"></div><div class="tk" style="left:355px;top:279px;width:1px;height:5px"></div><div class="tk" style="left:387px;top:279px;width:1px;height:5px"></div><div class="tk" style="left:419px;top:279px;width:1px;height:5px"></div><div class="tk" style="left:451px;top:279px;width:1px;height:5px"></div><div class="tk" style="left:483px;top:279px;width:1px;height:5px"></div><div class="tk" style="left:515px;top:279px;width:1px;height:5px"></div><div class="tk" style="left:547px;top:279px;width:1px;height:5px"></div><div class="tk" style="left:579px;top:279px;width:1px;height:5px"></div><div class="tk" style="left:611px;top:279px;width:1px;height:5px"></div>
<!-- legend -->
<div class="a" style="left:293px;top:316px;width:341px;height:22px;background:#c3c3c3;"></div>
<div class="a" style="left:293px;top:316px;width:12px;height:21px;background:linear-gradient(90deg,#d6d6d6,#cfcfcf);"></div>
<div class="a" style="left:620px;top:317px;width:13px;height:20px;background:linear-gradient(90deg,#c3c3c3,#8a8a8a);"></div>
<div class="a" style="left:633px;top:317px;width:1px;height:21px;background:#505050;"></div>
<div class="a" style="left:293px;top:316px;width:338px;height:1px;background:#d8d8d8;"></div>
<div class="a" style="left:293px;top:337px;width:341px;height:2px;background:linear-gradient(180deg,#8a8a8a,#9c9c9c);"></div>
<div class="lg" style="left:308px;">Gscint_US</div>
<svg style="position:absolute;left:383px;top:318px" width="25" height="19" shape-rendering="crispEdges">
<rect x="0" y="0" width="25" height="19" fill="#000"/>
<rect x="0" y="0" width="25" height="1" fill="#003000"/>
<rect x="0" y="0" width="1" height="19" fill="#003000"/>
<rect x="1" y="18" width="24" height="1" fill="#68b068"/>
<rect x="24" y="1" width="1" height="18" fill="#68b068"/>
<polyline points="2,14 12.5,3.5 23,14" fill="none" stroke="#ffff00" stroke-width="1"/>
</svg>
<div class="lg" style="left:414px;">DS cherenk</div>
<svg style="position:absolute;left:489px;top:318px" width="25" height="19" shape-rendering="crispEdges">
<rect x="0" y="0" width="25" height="19" fill="#000"/>
<rect x="0" y="0" width="25" height="1" fill="#003000"/>
<rect x="0" y="0" width="1" height="19" fill="#003000"/>
<rect x="1" y="18" width="24" height="1" fill="#68b068"/>
<rect x="24" y="1" width="1" height="18" fill="#68b068"/>
<polyline points="2.2,13.8 10.4,3.3 18.5,13.8 22.8,8" fill="none" stroke="#ff4040" stroke-width="1"/>
</svg>
<div class="lg" style="left:520px;letter-spacing:0.4px">Drift scint</div>
<svg style="position:absolute;left:595px;top:318px" width="25" height="19" shape-rendering="crispEdges">
<rect x="0" y="0" width="25" height="19" fill="#000"/>
<rect x="0" y="0" width="25" height="1" fill="#003000"/>
<rect x="0" y="0" width="1" height="19" fill="#003000"/>
<rect x="1" y="18" width="24" height="1" fill="#68b068"/>
<rect x="24" y="1" width="1" height="18" fill="#68b068"/>
<polyline points="2.2,13.8 10.4,3.3 18.5,13.8 22.8,8" fill="none" stroke="#00ff00" stroke-width="1"/>
</svg>
<!-- offsets -->
<div class="a" style="left:255px;top:344px;font-weight:bold;font-size:12px;line-height:14px;">Offsets</div>
<div class="a" style="left:268px;top:376px;font-weight:bold;font-size:12px;line-height:14px;letter-spacing:-0.5px">Scale</div>
<div class="bo" style="left:300px;top:342px;width:115px;height:30px;"><div class="bi"><div class="wt"><span>0.01</span></div></div></div><div class="bo" style="left:407px;top:342px;width:115px;height:30px;"><div class="bi"><div class="wt"><span>0.001</span></div></div></div><div class="bo" style="left:514px;top:342px;width:115px;height:30px;"><div class="bi"><div class="wt"><span>-0.001</span></div></div></div><div class="bo" style="left:300px;top:369px;width:115px;height:30px;"><div class="bi"><div class="wt"><span>0.1</span></div></div></div><div class="bo" style="left:407px;top:369px;width:115px;height:30px;"><div class="bi"><div class="wt"><span>1</span></div></div></div><div class="bo" style="left:514px;top:369px;width:115px;height:30px;"><div class="bi"><div class="wt"><span>0.1</span></div></div></div>
<div class="a" style="left:25px;top:355px;font-size:12px;line-height:14.5px;letter-spacing:-0.05px">Offset and scale for display only.<br>True voltages saved to .csv</div>
</body></html>
